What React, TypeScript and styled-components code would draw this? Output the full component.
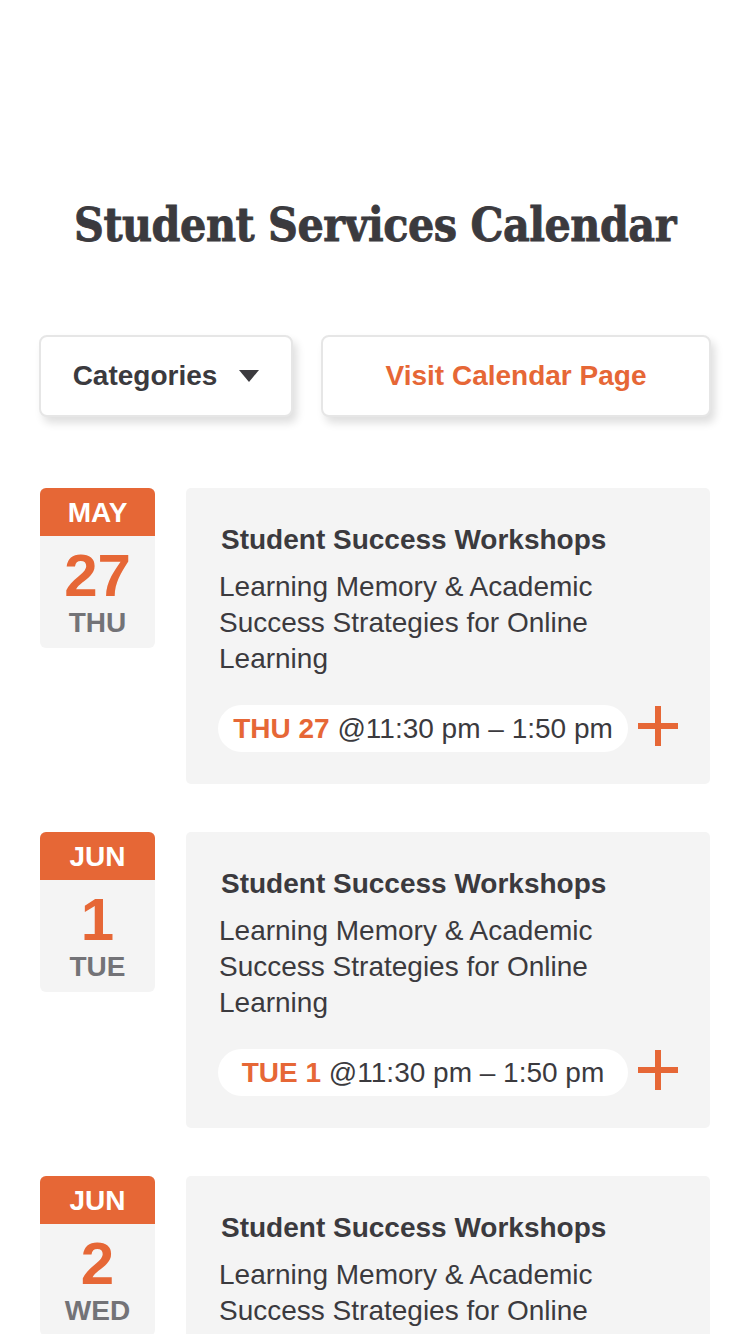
import styled, { createGlobalStyle } from 'styled-components';

const ORANGE = '#e66736';
const INK = '#3b3a3e';

interface EventItem {
	month: string;
	day: string;
	weekday: string;
	title: string;
	description: string;
	time: string;
}

const events: EventItem[] = [
	{
		month: 'MAY',
		day: '27',
		weekday: 'THU',
		title: 'Student Success Workshops',
		description: 'Learning Memory & Academic Success Strategies for Online Learning',
		time: '@11:30 pm – 1:50 pm',
	},
	{
		month: 'JUN',
		day: '1',
		weekday: 'TUE',
		title: 'Student Success Workshops',
		description: 'Learning Memory & Academic Success Strategies for Online Learning',
		time: '@11:30 pm – 1:50 pm',
	},
	{
		month: 'JUN',
		day: '2',
		weekday: 'WED',
		title: 'Student Success Workshops',
		description: 'Learning Memory & Academic Success Strategies for Online Learning',
		time: '@11:30 pm – 1:50 pm',
	},
];

const GlobalStyle = createGlobalStyle`
	body {
		margin: 0;
		background: #fff;
		font-family: 'Liberation Sans', Arial, sans-serif;
		color: ${INK};
	}
`;

const PlusIcon = () => (
	<PlusSvg width='40' height='40' viewBox='0 0 40 40'>
		<rect x='17' y='0' width='6' height='40' fill={ORANGE} />
		<rect x='0' y='17' width='40' height='6' fill={ORANGE} />
	</PlusSvg>
);

const App = () => {
	return (
		<Page>
			<GlobalStyle />
			<Heading>Student Services Calendar</Heading>
			<Toolbar>
				<CategoriesButton>
					Categories
					<Caret />
				</CategoriesButton>
				<CalendarLink>Visit Calendar Page</CalendarLink>
			</Toolbar>
			<EventList>
				{events.map((ev, i) => (
					<EventRow key={i}>
						<DateBlock>
							<Month>{ev.month}</Month>
							<DayNumber>{ev.day}</DayNumber>
							<Weekday>{ev.weekday}</Weekday>
						</DateBlock>
						<Card>
							<CardTitle>{ev.title}</CardTitle>
							<Description>{ev.description}</Description>
							<TimeRow>
								<TimePill>
									<strong>
										{ev.weekday} {ev.day}
									</strong>{' '}
									{ev.time}
								</TimePill>
								<PlusIcon />
							</TimeRow>
						</Card>
					</EventRow>
				))}
			</EventList>
		</Page>
	);
};

export default App;

const Page = styled.div`
	padding-top: 196px;
	width: 750px;
	height: 1334px;
	overflow: hidden;
	box-sizing: border-box;
`;

const Heading = styled.h1`
	margin: 0 0 81px;
	height: 58px;
	line-height: 58px;
	text-align: center;
	font-family: 'DejaVu Serif Condensed', 'DejaVu Serif', serif;
	font-weight: bold;
	font-size: 46px;
	letter-spacing: -0.5px;
	-webkit-text-stroke: 0.8px ${INK};
	color: ${INK};
`;

const Toolbar = styled.div`
	display: flex;
	gap: 28px;
	padding: 0 39px;
`;

const ButtonBase = styled.div`
	height: 82px;
	box-sizing: border-box;
	border: 2px solid #e6e6e6;
	border-radius: 8px;
	background: #fff;
	box-shadow: 4px 6px 8px rgba(0, 0, 0, 0.13);
	display: flex;
	align-items: center;
	justify-content: center;
	font-size: 28px;
	font-weight: bold;
`;

const CategoriesButton = styled(ButtonBase)`
	width: 254px;
	gap: 22px;
	color: ${INK};
`;

const Caret = styled.span`
	width: 0;
	height: 0;
	border-left: 10px solid transparent;
	border-right: 10px solid transparent;
	border-top: 12px solid ${INK};
`;

const CalendarLink = styled(ButtonBase)`
	flex: 1;
	color: ${ORANGE};
`;

const EventList = styled.div`
	margin-top: 71px;
	padding: 0 40px;
	display: flex;
	flex-direction: column;
	gap: 48px;
`;

const EventRow = styled.div`
	display: flex;
	align-items: flex-start;
	gap: 31px;
`;

const DateBlock = styled.div`
	width: 115px;
	flex-shrink: 0;
	background: #f4f4f4;
	border-radius: 6px;
	overflow: hidden;
	text-align: center;
	font-weight: bold;
	padding-bottom: 10px;
`;

const Month = styled.div`
	background: ${ORANGE};
	color: #fff;
	height: 48px;
	line-height: 50px;
	font-size: 28px;
`;

const DayNumber = styled.div`
	color: ${ORANGE};
	font-size: 60px;
	line-height: 64px;
	margin-top: 8px;
`;

const Weekday = styled.div`
	color: #737377;
	font-size: 28px;
	line-height: 30px;
`;

const Card = styled.div`
	flex: 1;
	background: #f4f4f4;
	border-radius: 5px;
	padding: 36px 32px 32px 33px;
`;

const CardTitle = styled.div`
	font-size: 28px;
	font-weight: bold;
	line-height: 32px;
	padding-left: 2px;
	color: ${INK};
`;

const Description = styled.div`
	margin-top: 13px;
	font-size: 28px;
	line-height: 36px;
	color: ${INK};
`;

const TimeRow = styled.div`
	margin-top: 28px;
	display: flex;
	align-items: center;
	gap: 10px;
	margin-left: -1px;
`;

const TimePill = styled.div`
	width: 410px;
	height: 47px;
	line-height: 47px;
	border-radius: 24px;
	background: #fff;
	text-align: center;
	font-size: 28px;
	color: ${INK};
	white-space: pre;

	strong {
		color: ${ORANGE};
	}
`;

const PlusSvg = styled.svg`
	margin-bottom: 6px;
`;
